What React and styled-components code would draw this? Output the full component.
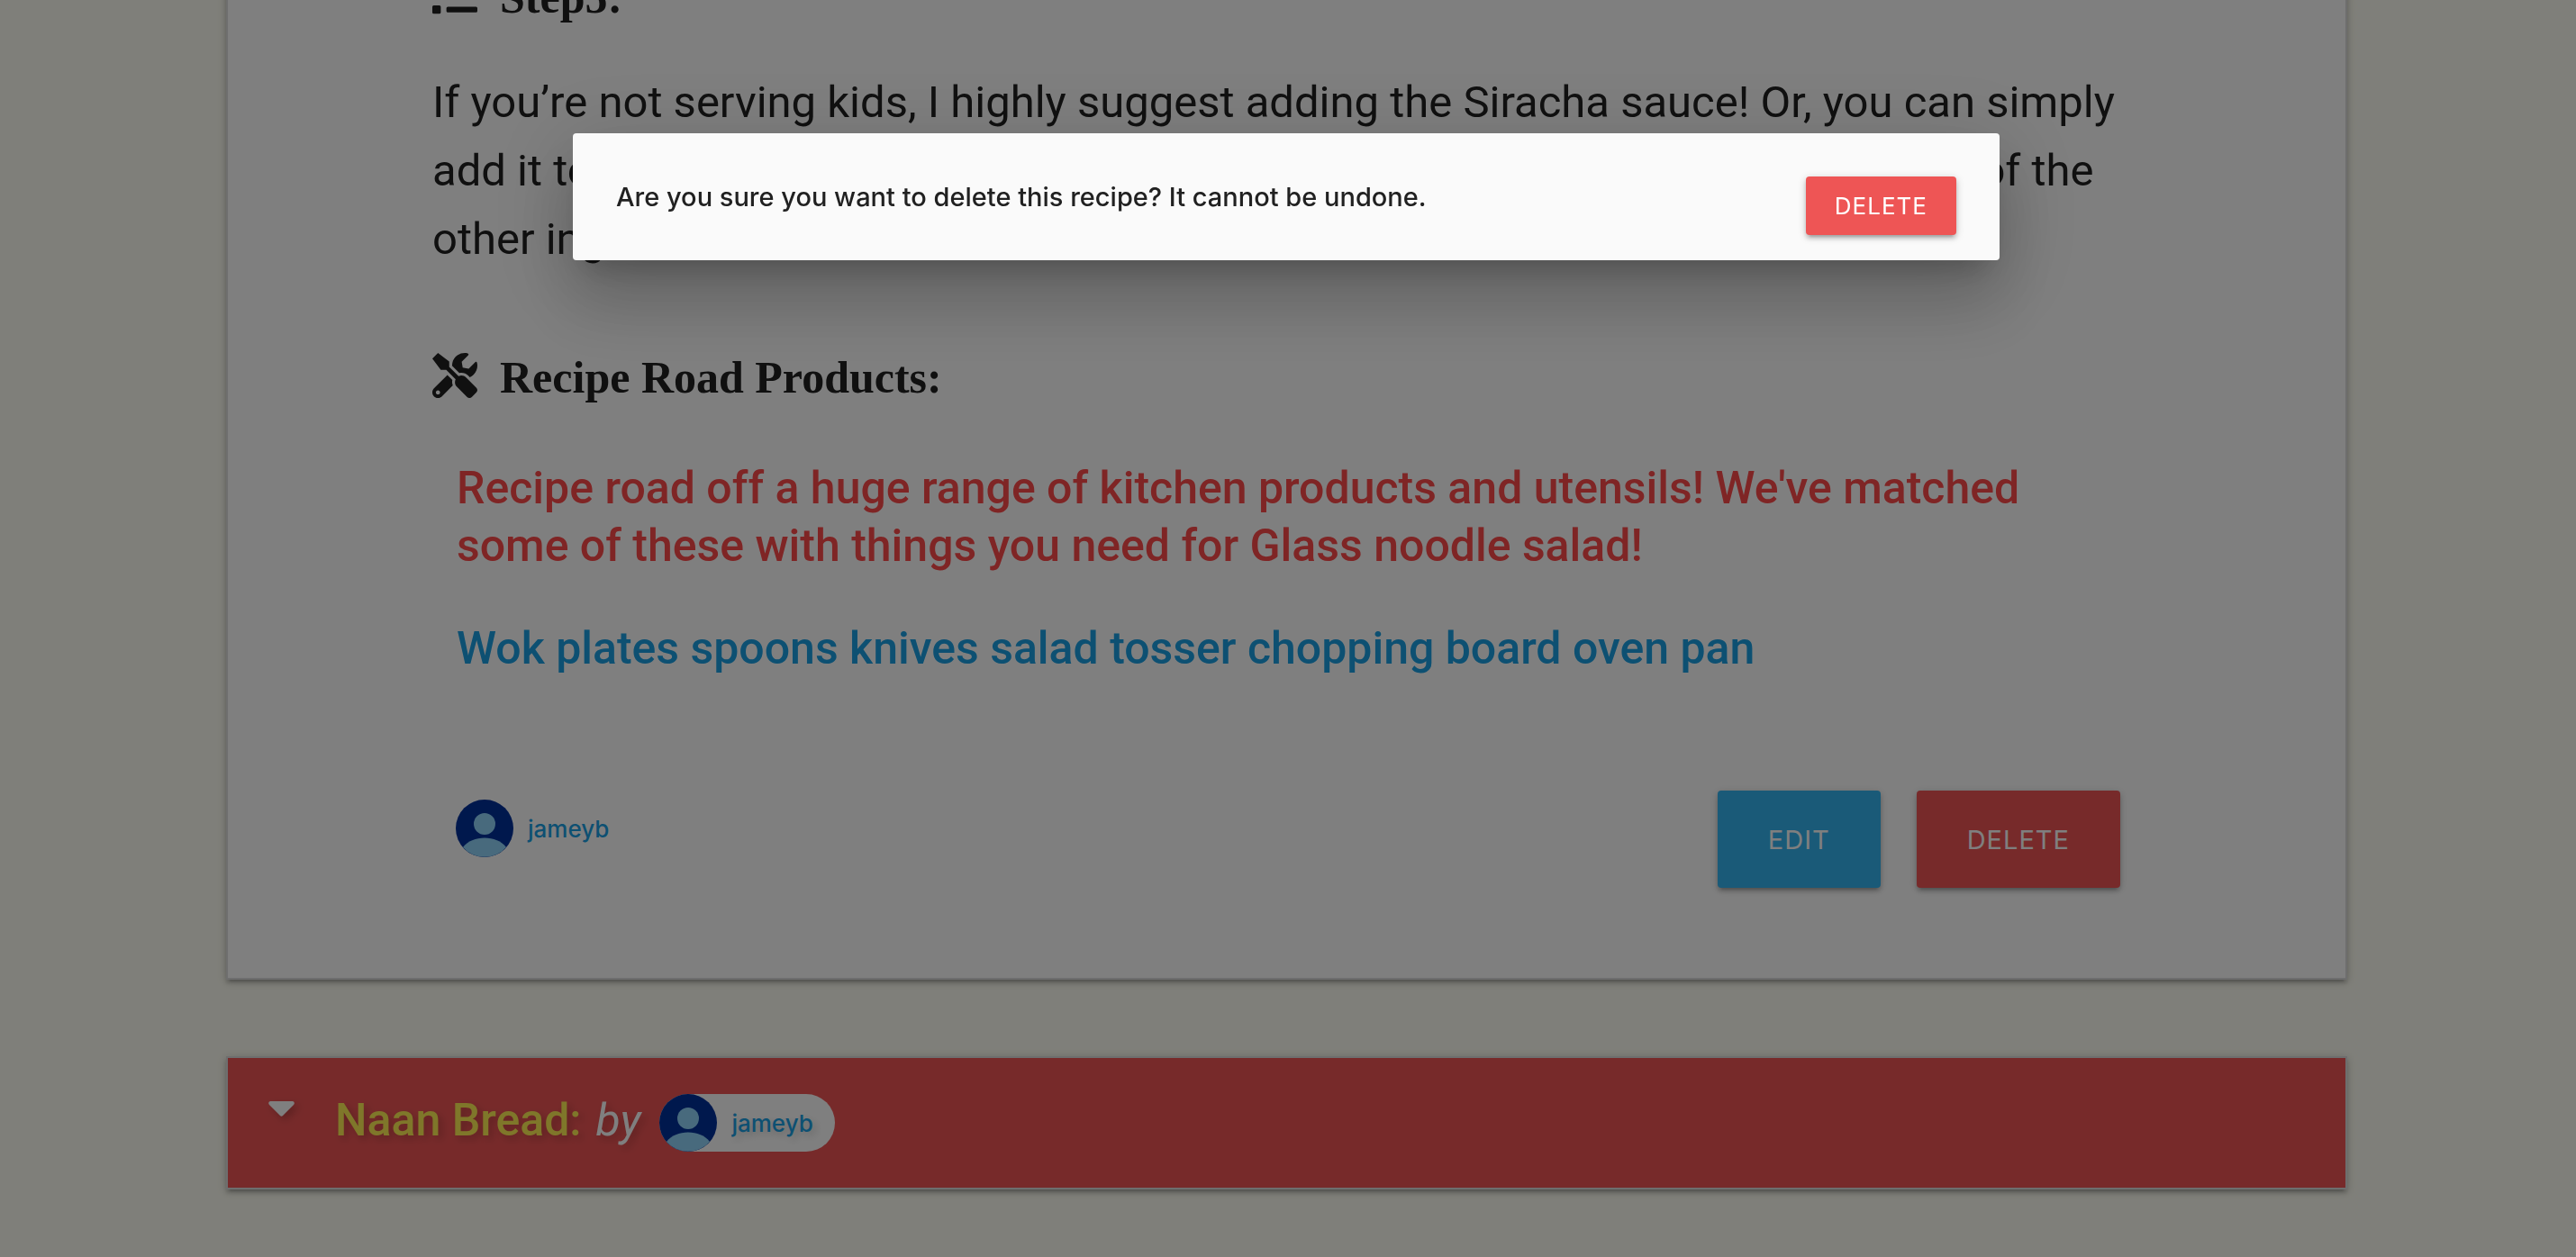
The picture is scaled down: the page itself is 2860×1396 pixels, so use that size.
import React from "react";
import styled, { createGlobalStyle } from "styled-components";
import { FaList, FaTools } from "react-icons/fa";

const sans = `Inter, "Noto Sans", sans-serif`;
const display = `Roboto, "Noto Sans", sans-serif`;
const serif = `"Liberation Serif", "Times New Roman", serif`;

const GlobalStyle = createGlobalStyle`
  *, *::before, *::after { box-sizing: border-box; }
  body {
    margin: 0;
    background: #fffff4;
    color: #212121;
    font-family: ${sans};
  }
`;

const Page = styled.main`
  height: 100vh;
  overflow: hidden;
  padding: 0 254px 0 251px;
`;

const Panel = styled.section`
  border: 2px solid #dddddd;
  box-shadow: 0 4px 4px 0 rgba(0, 0, 0, 0.14), 0 6px 2px -4px rgba(0, 0, 0, 0.12),
    0 2px 10px 0 rgba(0, 0, 0, 0.2);
`;

const Recipe = styled(Panel)`
  margin-top: -100px;
  padding: 68px 227px 100px;
  background: #ffffff;
`;

const Heading = styled.h4`
  display: flex;
  align-items: flex-start;
  gap: 25px;
  margin: 0;
  font: bold 50px/55px ${serif};

  svg {
    width: 50px;
    height: 50px;
  }
`;

const StepText = styled.p`
  margin: 51px 0 88px;
  font-family: ${display};
  font-size: 49px;
  line-height: 76px;
`;

const Products = styled.div`
  display: flex;
  flex-direction: column;
  gap: 50px;
  padding: 63px 27px 126px;
`;

const ProductText = styled.p`
  margin: 0;
  font-family: ${display};
  font-size: 50px;
  line-height: 64px;
  font-weight: 500;
  color: ${(p) => p.$color};
`;

const Footer = styled.footer`
  display: flex;
  justify-content: space-between;
  align-items: flex-start;
  padding: 0 23px 0 26px;
`;

const Actions = styled.div`
  display: flex;
  gap: 40px;
`;

const Button = styled.button`
  height: ${(p) => (p.$small ? 65 : 108)}px;
  padding: 0 ${(p) => (p.$small ? 32 : 56)}px;
  border: 0;
  border-radius: 4px;
  background: ${(p) => p.$color};
  color: #ffffff;
  font-family: ${sans};
  font-size: ${(p) => (p.$small ? 26 : 29)}px;
  letter-spacing: 1px;
  text-transform: uppercase;
  cursor: pointer;
  box-shadow: 0 4px 4px 0 rgba(0, 0, 0, 0.14), 0 6px 2px -4px rgba(0, 0, 0, 0.12),
    0 2px 10px 0 rgba(0, 0, 0, 0.2);
`;

const Chip = styled.a`
  display: inline-flex;
  align-items: center;
  gap: 16px;
  height: 64px;
  padding-right: 24px;
  border-radius: 32px;
  background: #ffffff;
  color: #1aa0e4;
  font-size: 26px;
  font-weight: 500;
  text-decoration: none;

  svg {
    width: 64px;
    height: 64px;
  }
`;

const AuthorSlot = styled.div`
  padding-top: 10px;
`;

const NextRecipe = styled(Panel)`
  margin-top: 85px;
  background: #ee5555;
`;

const RecipeToggle = styled.div`
  display: flex;
  align-items: flex-start;
  padding: 40px 45px;
  text-shadow: 4px 4px 8px rgba(0, 0, 0, 0.2);
`;

const Caret = styled.svg`
  width: 29px;
  height: 17px;
  margin: 8px 45px 0 0;
  filter: drop-shadow(4px 4px 4px rgba(0, 0, 0, 0.2));
`;

const RecipeName = styled.h4`
  margin: 0;
  color: #ffee55;
  font-family: ${display};
  font-size: 50px;
  line-height: 58px;
  font-weight: 500;
`;

const By = styled.em`
  margin: 0 21px 0 16px;
  color: #ffffff;
  font-family: ${display};
  font-size: 50px;
  line-height: 58px;
`;

const Overlay = styled.div`
  position: fixed;
  inset: 0;
  display: flex;
  justify-content: center;
  align-items: flex-start;
  padding: 148px 4px 0 0;
  background: rgba(0, 0, 0, 0.5);
`;

const Modal = styled.div`
  display: flex;
  justify-content: space-between;
  align-items: flex-start;
  width: 1584px;
  max-width: 100%;
  padding: 48px 48px 28px;
  border-radius: 4px;
  background: #fafafa;
  box-shadow: 0 48px 76px 6px rgba(0, 0, 0, 0.14), 0 18px 92px 16px rgba(0, 0, 0, 0.12),
    0 22px 30px -14px rgba(0, 0, 0, 0.2);
`;

const Question = styled.h6`
  margin: 0;
  font-size: 29px;
  line-height: 46px;
  font-weight: 500;
`;

function Avatar() {
  return (
    <svg viewBox="0 0 64 64" aria-hidden="true">
      <circle cx="32" cy="32" r="32" fill="#00309a" />
      <circle cx="32" cy="27" r="12" fill="#90d4fa" />
      <path d="M8 53C18 39 46 39 56 53A32 32 0 0 1 8 53Z" fill="#90d4fa" />
    </svg>
  );
}

function Author({ name }) {
  return (
    <Chip href="#profile">
      <Avatar />
      {name}
    </Chip>
  );
}

export default function App() {
  return (
    <>
      <GlobalStyle />
      <Page>
        <Recipe>
          <Heading>
            <FaList aria-hidden="true" />
            Step5:
          </Heading>
          <StepText>
            If you’re not serving kids, I highly suggest adding the Siracha sauce! Or, you can
            simply add it to your own bowl when it is served, instead of mixing it in directly
            with all of the other ingredients.
          </StepText>
          <Heading>
            <FaTools aria-hidden="true" />
            Recipe Road Products:
          </Heading>
          <Products>
            <ProductText $color="#ff4a4a">
              Recipe road off a huge range of kitchen products and utensils! We've matched some of
              these with things you need for Glass noodle salad!
            </ProductText>
            <ProductText $color="#1aa0e4">
              Wok plates spoons knives salad tosser chopping board oven pan
            </ProductText>
          </Products>
          <Footer>
            <AuthorSlot>
              <Author name="jameyb" />
            </AuthorSlot>
            <Actions>
              <Button type="button" $color="#34b4f0">Edit</Button>
              <Button type="button" $color="#ee5555">Delete</Button>
            </Actions>
          </Footer>
        </Recipe>
        <NextRecipe>
          <RecipeToggle>
            <Caret viewBox="0 0 29 17" aria-hidden="true">
              <path d="M2 0H27Q30 1 28 4L16 16Q14.500 17.500 13 16L1 4Q-1 1 2 0Z" fill="#ffffff" />
            </Caret>
            <RecipeName>Naan Bread:</RecipeName>
            <By>by</By>
            <Author name="jameyb" />
          </RecipeToggle>
        </NextRecipe>
      </Page>
      <Overlay>
        <Modal role="dialog" aria-modal="true" aria-labelledby="delete-question">
          <Question id="delete-question">
            Are you sure you want to delete this recipe? It cannot be undone.
          </Question>
          <Button type="button" $small $color="#ee5555">Delete</Button>
        </Modal>
      </Overlay>
    </>
  );
}
